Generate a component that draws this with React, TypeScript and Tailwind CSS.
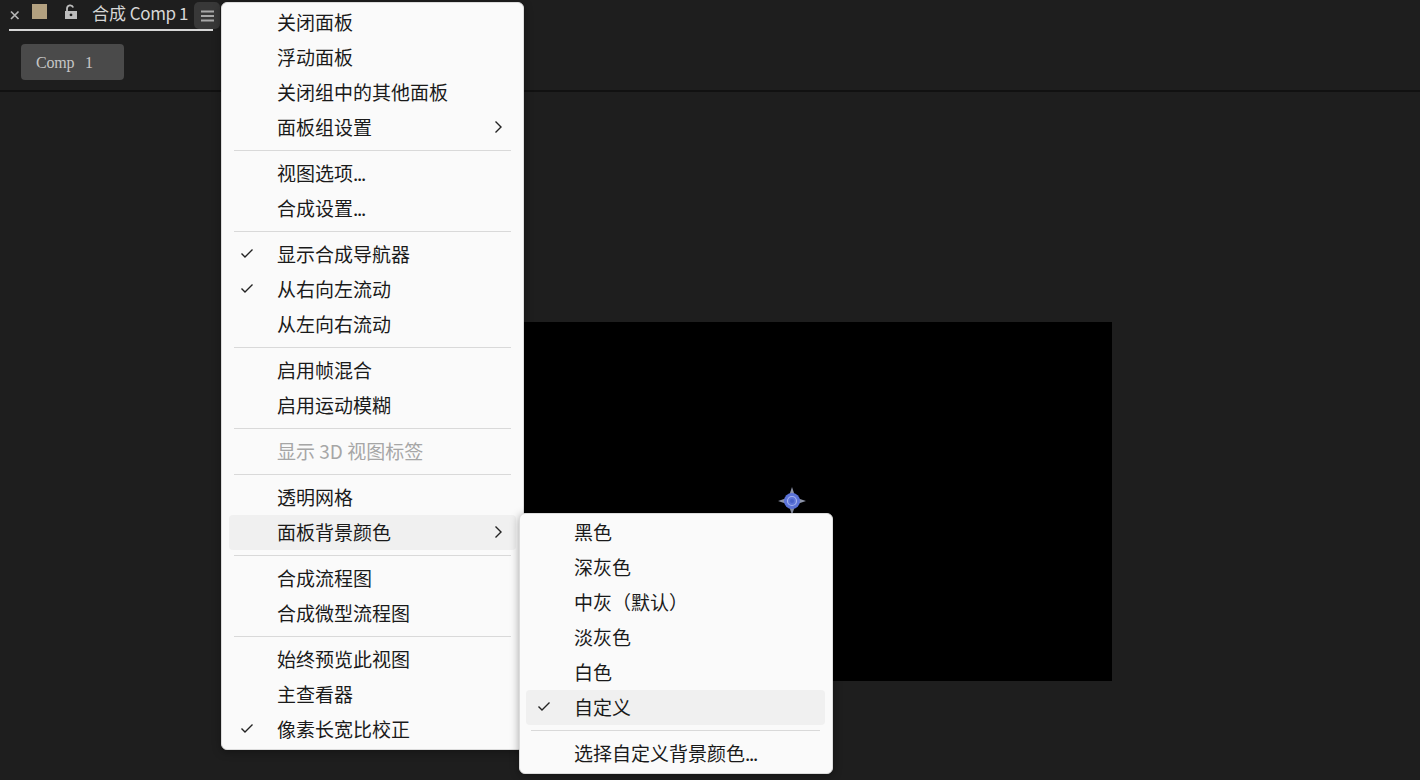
import React from "react";

type MenuEntry =
  | { sep: true }
  | { label: string; checked?: boolean; arrow?: boolean; disabled?: boolean; active?: boolean };

const mainMenu: MenuEntry[] = [
  { label: "关闭面板" },
  { label: "浮动面板" },
  { label: "关闭组中的其他面板" },
  { label: "面板组设置", arrow: true },
  { sep: true },
  { label: "视图选项..." },
  { label: "合成设置..." },
  { sep: true },
  { label: "显示合成导航器", checked: true },
  { label: "从右向左流动", checked: true },
  { label: "从左向右流动" },
  { sep: true },
  { label: "启用帧混合" },
  { label: "启用运动模糊" },
  { sep: true },
  { label: "显示 3D 视图标签", disabled: true },
  { sep: true },
  { label: "透明网格" },
  { label: "面板背景颜色", arrow: true, active: true },
  { sep: true },
  { label: "合成流程图" },
  { label: "合成微型流程图" },
  { sep: true },
  { label: "始终预览此视图" },
  { label: "主查看器" },
  { label: "像素长宽比校正", checked: true },
];

const subMenu: MenuEntry[] = [
  { label: "黑色" },
  { label: "深灰色" },
  { label: "中灰（默认）" },
  { label: "淡灰色" },
  { label: "白色" },
  { label: "自定义", checked: true, active: true },
  { sep: true },
  { label: "选择自定义背景颜色..." },
];

const Check = () => (
  <svg width="16" height="16" viewBox="0 0 16 16" fill="none" className="absolute left-[10px] top-[8px]">
    <path d="M2.5 8.5 L6 12 L13.5 4.5" stroke="#222" strokeWidth="1.4" />
  </svg>
);

const Arrow = () => (
  <svg width="10" height="14" viewBox="0 0 10 14" fill="none" className="absolute right-[13px] top-[10px]">
    <path d="M2.5 1.5 L8 7 L2.5 12.5" stroke="#222" strokeWidth="1.4" />
  </svg>
);

// the dots in the reference sit tighter than the font's own
const Label = ({ text }: { text: string }) =>
  text.endsWith("...") ? (
    <>
      {text.slice(0, -3)}
      <span className="tracking-[-1.3px]">...</span>
    </>
  ) : (
    <>{text}</>
  );

const Menu = ({ items, className }: { items: MenuEntry[]; className: string }) => (
  <div
    className={`absolute rounded-[6px] border border-[#dcdcdc] bg-[#fafafa] shadow-[0_2px_8px_rgba(0,0,0,0.35)] ${className}`}
  >
    {items.map((item, i) =>
      "sep" in item ? (
        <div key={i} className="pt-[5px] pb-[5px] px-[5px]">
          <div className="h-px bg-[#d9d9d9]" />
        </div>
      ) : (
        <div
          key={i}
          className={`relative h-[35px] rounded-[4px] pl-[48px] text-[19px] leading-[33px] whitespace-pre ${
            item.active ? "bg-[#f0f0f0]" : ""
          } ${item.disabled ? "text-[#a6a6a6]" : "text-[#1a1a1a]"}`}
        >
          {item.checked && <Check />}
          <Label text={item.label} />
          {item.arrow && <Arrow />}
        </div>
      )
    )}
  </div>
);

export default function App() {
  return (
    <div className="relative flex h-[780px] w-[1420px] flex-col overflow-hidden bg-[#1e1e1e] font-['Noto_Sans_CJK_SC','Liberation_Sans',sans-serif]">
      {/* panel tab */}
      <div className="flex h-[31px] shrink-0 pl-[9px]">
        <div className="flex h-[31px] w-[204px] items-center border-b-2 border-[#d6d6d6] pb-[3px]">
          <svg width="10" height="10" viewBox="0 0 10 10" className="ml-[1px] mt-[4px]">
            <path d="M1 1.5 L8.5 9 M8.5 1.5 L1 9" stroke="#b4b4b4" strokeWidth="1.7" />
          </svg>
          <div className="ml-[12px] mb-[4px] h-[15px] w-[15px] bg-[#b3a180]" />
          <svg width="14" height="16" viewBox="0 0 14 16" className="ml-[17px] mb-[3px]">
            <path d="M3 7 V4.5 a3.2 3.2 0 0 1 6.2 -1" stroke="#bdbdbd" strokeWidth="1.8" fill="none" />
            <path d="M1 7 H13 V15 H1 Z M7 9.5 a1.4 1.4 0 1 0 0.01 0 Z" fill="#bdbdbd" fillRule="evenodd" />
          </svg>
          <span className="ml-[14px] whitespace-pre text-[17px] leading-[24px] text-[#d6d6d6]">
            合成 <span className="tracking-[-0.4px]">Comp 1</span>
          </span>
        </div>
        <div className="ml-[-19px] mt-[2px] flex h-[27px] w-[26px] items-center justify-center rounded-[5px] bg-[#383838]">
          <svg width="13" height="12" viewBox="0 0 13 12">
            <path d="M0 1.5 H13 M0 6 H13 M0 10.5 H13" stroke="#a8a8a8" strokeWidth="1.8" />
          </svg>
        </div>
      </div>

      {/* breadcrumb row */}
      <div className="h-[61px] shrink-0 border-b-2 border-[#111] pl-[21px] pt-[13px]">
        <div className="flex h-[36px] w-[103px] items-center rounded-[4px] bg-[#4a4a4a] pl-[15px] pt-px font-['Liberation_Serif',serif] text-[16px] tracking-[-0.2px] text-[#c6c6c6] [word-spacing:7px]">
          Comp 1
        </div>
      </div>

      {/* viewer */}
      <div className="flex-1 pl-[474px] pt-[230px]">
        <div className="relative h-[359px] w-[638px] bg-black">
          <svg width="28" height="28" viewBox="0 0 28 28" className="absolute left-[304px] top-[165px]">
            <path d="M14 0 L17.5 10.5 L28 14 L17.5 17.5 L14 28 L10.5 17.5 L0 14 L10.5 10.5 Z" fill="#8c93a8" />
            <circle cx="14" cy="14" r="8" fill="#5b73d8" />
            <circle cx="14" cy="14" r="4.5" fill="none" stroke="#a4b2ee" strokeWidth="1.2" />
            <circle cx="14" cy="14" r="2" fill="#4660c8" />
          </svg>
        </div>
      </div>

      <Menu items={mainMenu} className="left-[221px] top-[2px] w-[303px] pt-[2px] pb-[2px] px-[7px]" />
      <Menu items={subMenu} className="left-[519px] top-[513px] w-[314px] pt-[1px] pb-[2px] pl-[6px] pr-[7px]" />
    </div>
  );
}
